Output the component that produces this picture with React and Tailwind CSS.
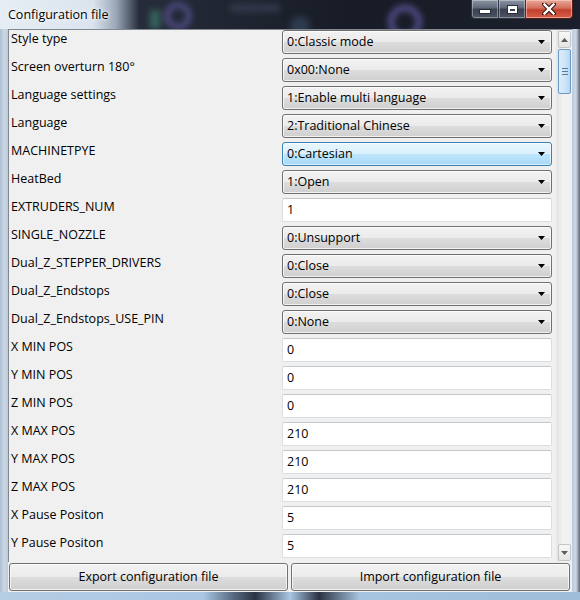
import React from 'react';

const rows = [
    { label: 'Style type', type: 'select', value: '0:Classic mode' },
    { label: 'Screen overturn 180°', type: 'select', value: '0x00:None' },
    { label: 'Language settings', type: 'select', value: '1:Enable multi language' },
    { label: 'Language', type: 'select', value: '2:Traditional Chinese' },
    { label: 'MACHINETPYE', type: 'select', value: '0:Cartesian', focused: true },
    { label: 'HeatBed', type: 'select', value: '1:Open' },
    { label: 'EXTRUDERS_NUM', type: 'input', value: '1' },
    { label: 'SINGLE_NOZZLE', type: 'select', value: '0:Unsupport' },
    { label: 'Dual_Z_STEPPER_DRIVERS', type: 'select', value: '0:Close' },
    { label: 'Dual_Z_Endstops', type: 'select', value: '0:Close' },
    { label: 'Dual_Z_Endstops_USE_PIN', type: 'select', value: '0:None' },
    { label: 'X MIN POS', type: 'input', value: '0' },
    { label: 'Y MIN POS', type: 'input', value: '0' },
    { label: 'Z MIN POS', type: 'input', value: '0' },
    { label: 'X MAX POS', type: 'input', value: '210' },
    { label: 'Y MAX POS', type: 'input', value: '210' },
    { label: 'Z MAX POS', type: 'input', value: '210' },
    { label: 'X Pause Positon', type: 'input', value: '5' },
    { label: 'Y Pause Positon', type: 'input', value: '5' },
];

const Arrow = () => (
    <svg width="7" height="4" viewBox="0 0 7 4" className="shrink-0">
        <path d="M0 0H7L3.5 4Z" fill="#000" />
    </svg>
);

const Select = ({ value, focused }) => (
    <div
        className={
            focused
                ? 'w-[270px] h-[24px] flex items-center justify-between pl-[4px] pr-[6px] rounded-[3px] border border-[#3c7fb1] bg-[linear-gradient(#eaf6fd_0%,#d9f0fc_50%,#bee6fd_50%,#a7d9f5_100%)] shadow-[inset_0_0_0_1px_rgba(255,255,255,0.6)]'
                : 'w-[270px] h-[24px] flex items-center justify-between pl-[4px] pr-[6px] rounded-[3px] border border-[#707070] bg-[linear-gradient(#f2f2f2_0%,#ebebeb_50%,#dddddd_50%,#cfcfcf_100%)] shadow-[inset_0_0_0_1px_rgba(255,255,255,0.7)]'
        }
    >
        <span className="leading-[16px] whitespace-nowrap">{value}</span>
        <Arrow />
    </div>
);

const Input = ({ value }) => (
    <div className="w-[270px] h-[24px] flex items-center pl-[4px] rounded-[2px] border border-[#dadde3] border-t-[#c3c7ce] bg-white">
        <span className="leading-[16px]">{value}</span>
    </div>
);

const ScrollBar = () => (
    <div className="w-[16px] flex flex-col bg-[linear-gradient(90deg,#e3e3e3,#f2f2f2_40%,#f0f0f0)] border-l border-[#e8e8e8]">
        <div className="h-[17px] mx-[1px] mt-[1px] flex items-center justify-center rounded-[2px] border border-[#c4c4c4] bg-[linear-gradient(#f8f8f8,#e4e4e4)]">
            <svg width="7" height="4" viewBox="0 0 7 4">
                <path d="M0 4H7L3.5 0Z" fill="#5c5c5c" />
            </svg>
        </div>
        <div className="h-[45px] mx-[1px] mt-[1px] flex flex-col items-center justify-center gap-[2px] rounded-[2px] border border-[#6c9ac4] bg-[linear-gradient(90deg,#dcecfb,#cfe6f9_50%,#b7d6f1)]">
            <div className="w-[6px] h-[1px] bg-[#557aa0]" />
            <div className="w-[6px] h-[1px] bg-[#557aa0]" />
            <div className="w-[6px] h-[1px] bg-[#557aa0]" />
        </div>
        <div className="flex-1" />
        <div className="h-[17px] mx-[1px] mb-[1px] flex items-center justify-center rounded-[2px] border border-[#c4c4c4] bg-[linear-gradient(#f8f8f8,#e4e4e4)]">
            <svg width="7" height="4" viewBox="0 0 7 4">
                <path d="M0 0H7L3.5 4Z" fill="#5c5c5c" />
            </svg>
        </div>
    </div>
);

const TitleBar = () => (
    <div className="relative h-[29px] flex items-start bg-[linear-gradient(90deg,#e6edf4_0%,#dbe4ee_16%,#9aa7b8_20%,#262c3a_24%,#181c26_60%,#1b1f2b_100%)]">
        {/* blurred desktop showing through the glass */}
        <svg className="absolute inset-0" width="580" height="29">
            <defs>
                <filter id="blur" x="-50%" y="-50%" width="200%" height="200%">
                    <feGaussianBlur stdDeviation="3" />
                </filter>
            </defs>
            <g filter="url(#blur)" opacity="0.7">
                <circle cx="178" cy="16" r="11" fill="none" stroke="#6a5fb0" strokeWidth="5" />
                <rect x="150" y="10" width="10" height="19" fill="#3d7a6a" />
                <circle cx="405" cy="22" r="14" fill="none" stroke="#6d63b8" strokeWidth="6" />
                <circle cx="300" cy="26" r="10" fill="#34465e" />
                <rect x="230" y="4" width="50" height="8" fill="#3a4256" />
            </g>
        </svg>
        <span className="relative ml-[8px] mt-[7px] leading-[16px] text-black [text-shadow:0_0_6px_#fff,0_0_3px_#fff]">
            Configuration file
        </span>
        <div className="relative ml-auto mr-[7px] flex h-[19px]">
            <div className="w-[28px] flex items-center justify-center rounded-bl-[4px] border border-[#2f3542] border-t-0 bg-[linear-gradient(#8b94a3_0%,#5f6878_45%,#3a4150_50%,#4c5464_100%)] shadow-[inset_0_0_0_1px_rgba(255,255,255,0.35)]">
                <div className="w-[10px] h-[3px] mt-[5px] bg-white border border-[#2a2f3a] box-content" />
            </div>
            <div className="w-[27px] flex items-center justify-center border-b border-r border-[#2f3542] bg-[linear-gradient(#8b94a3_0%,#5f6878_45%,#3a4150_50%,#4c5464_100%)] shadow-[inset_0_0_0_1px_rgba(255,255,255,0.35)]">
                <div className="w-[9px] h-[7px] border-2 border-t-[3px] border-white outline outline-1 outline-[#2a2f3a]" />
            </div>
            <div className="w-[47px] flex items-center justify-center rounded-br-[4px] border border-[#5a1d14] border-t-0 border-l-0 bg-[linear-gradient(#e8a898_0%,#d46e5c_45%,#c1402c_55%,#d6604a_100%)] shadow-[inset_0_0_0_1px_rgba(255,220,210,0.5)]">
                <svg width="14" height="12" viewBox="0 0 14 12">
                    <path d="M2 1L12 11M12 1L2 11" stroke="#3a1a14" strokeWidth="4.5" strokeLinecap="round" />
                    <path d="M2.5 1.5L11.5 10.5M11.5 1.5L2.5 10.5" stroke="#fff" strokeWidth="2.4" strokeLinecap="square" />
                </svg>
            </div>
        </div>
    </div>
);

const App = () => {
    return (
        <div className="w-[580px] h-[600px] overflow-hidden flex flex-col bg-[#c4d3e2] font-['Open_Sans',sans-serif] text-[12.5px] text-black">
            <TitleBar />
            <div className="flex flex-1 min-h-0">
                <div className="w-[8px] bg-[linear-gradient(90deg,#aebfd2,#cbd8e6_50%,#bccbdb)]" />
                <div className="w-[564px] flex flex-col bg-[#f0f0f0]">
                    <div className="h-[533px] flex border border-r-0 border-b-0 border-[#828790]">
                        <div className="flex-1 overflow-hidden">
                            {rows.map((row, index) => (
                                <div key={index} className="h-[28px] flex items-start">
                                    <div className="w-[273px] pl-[2px] pt-[1px] leading-[16px] whitespace-nowrap">
                                        {row.label}
                                    </div>
                                    {row.type === 'select' ? (
                                        <Select value={row.value} focused={row.focused} />
                                    ) : (
                                        <Input value={row.value} />
                                    )}
                                </div>
                            ))}
                        </div>
                        <ScrollBar />
                    </div>
                    <div className="flex gap-[3px] pl-[1px] pr-[2px] pt-[1px]">
                        <button className="w-[279px] h-[28px] rounded-[3px] border border-[#707070] bg-[linear-gradient(#f2f2f2_0%,#ebebeb_50%,#dddddd_50%,#cfcfcf_100%)] shadow-[inset_0_0_0_1px_rgba(255,255,255,0.7)] leading-[16px]">
                            Export configuration file
                        </button>
                        <button className="w-[279px] h-[28px] rounded-[3px] border border-[#707070] bg-[linear-gradient(#f2f2f2_0%,#ebebeb_50%,#dddddd_50%,#cfcfcf_100%)] shadow-[inset_0_0_0_1px_rgba(255,255,255,0.7)] leading-[16px]">
                            Import configuration file
                        </button>
                    </div>
                </div>
                <div className="w-[8px] bg-[linear-gradient(90deg,#bccbdb,#cbd8e6_50%,#5d6572)]" />
            </div>
            <div className="h-[8px] bg-[linear-gradient(90deg,#b6cde4_0%,#a9c6e3_35%,#5a6e86_40%,#2a3344_44%,#a9c6e3_50%,#2b3242_55%,#a6c3df_62%,#9fbcd9_100%)]" />
        </div>
    );
};

export default App;
